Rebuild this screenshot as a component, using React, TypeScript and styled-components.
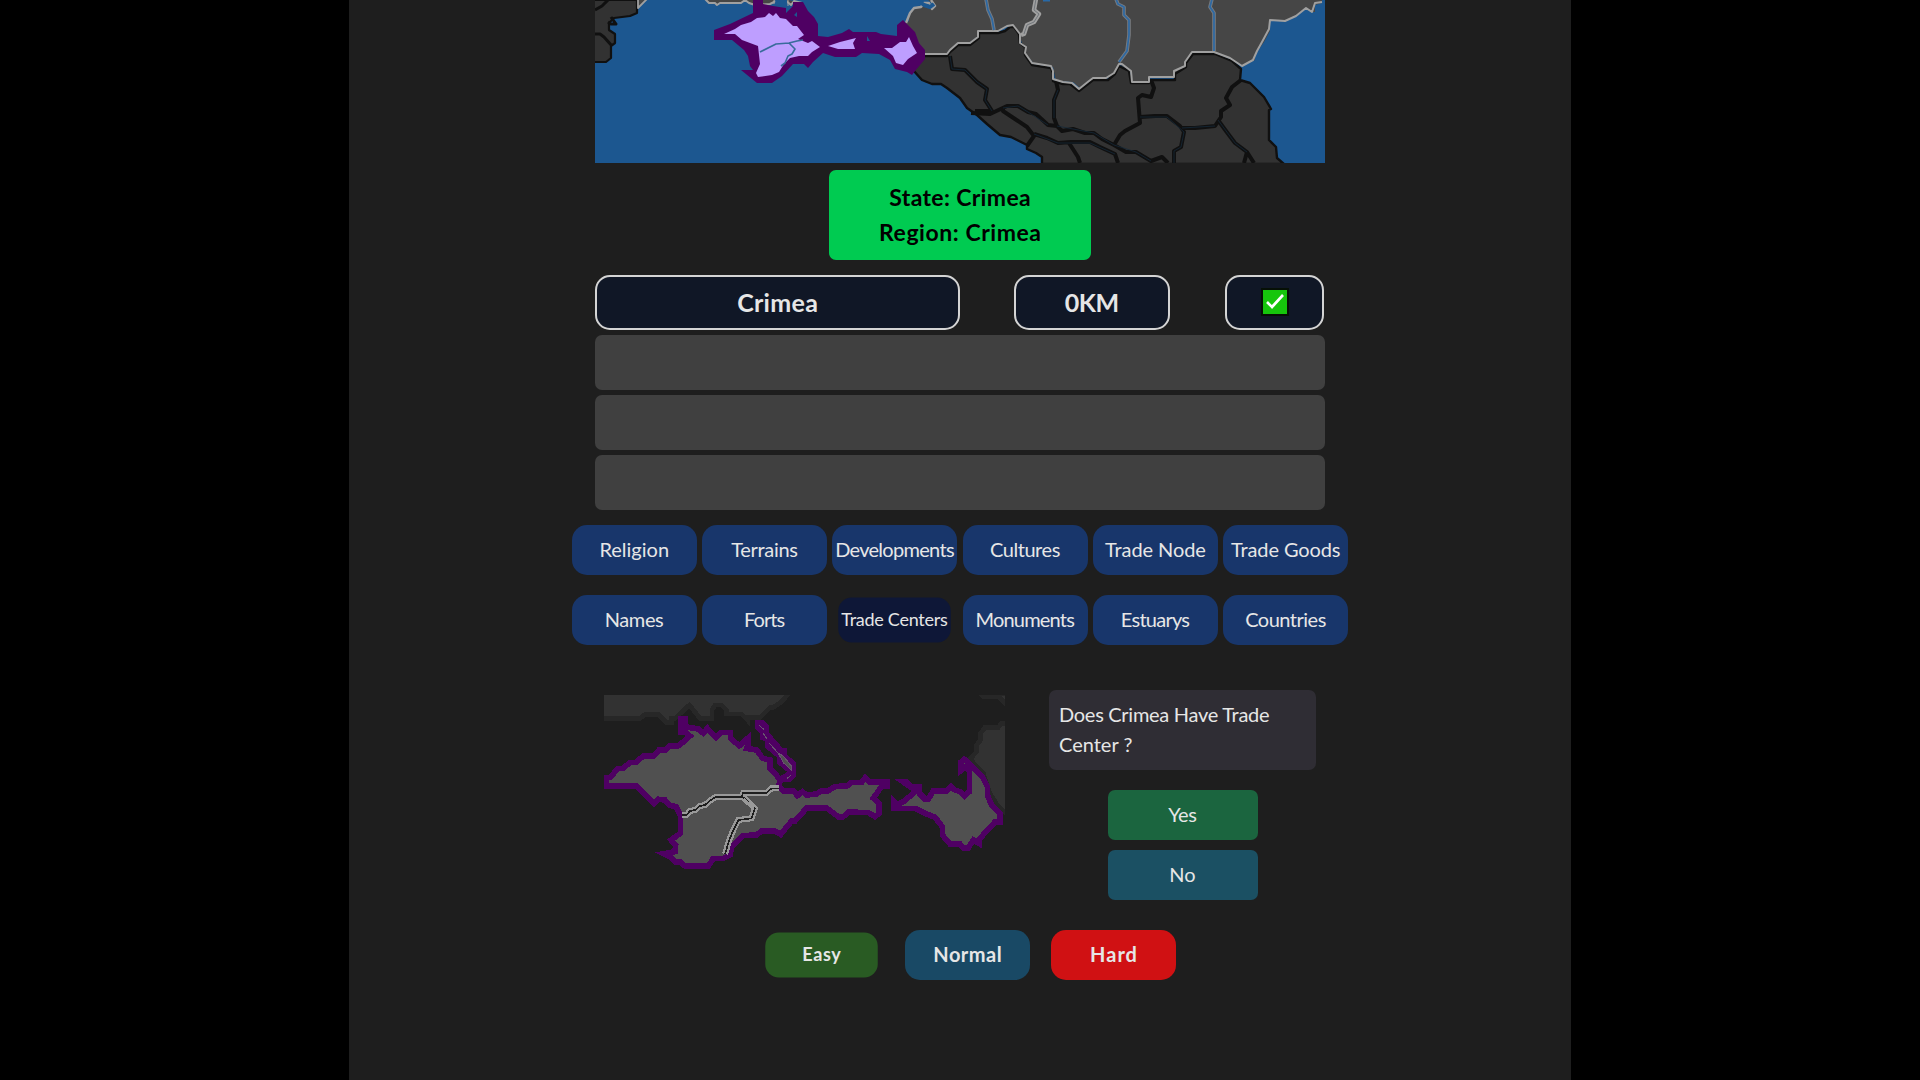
import React from "react";
import styled, { createGlobalStyle } from "styled-components";

const Global = createGlobalStyle`
  *{box-sizing:border-box}
  html,body{margin:0;background:#000;overflow:hidden}
  body{font-family:Lato,"Open Sans",sans-serif;font-size:20px;line-height:30px;color:#e6e6e6}
`;
const Page = styled.main`
  width:1222px;height:1080px;margin:0 auto;background:#1e1e1e;overflow:hidden;
  display:flex;flex-direction:column;align-items:center;
`;
const MapView = styled.div`width:730px;height:163px;background:#1c5790;flex:none;svg{display:block}`;
const Answer = styled.section`
  width:262px;height:90px;margin-top:7px;border-radius:7px;background:#00cb51;color:#000;
  display:flex;flex-direction:column;align-items:center;padding-top:10px;
  font-size:23px;font-weight:700;line-height:35px;flex:none;
`;
const Guess = styled.section`width:730px;display:grid;grid-template-columns:365px 156px 100px;column-gap:54px;margin-top:15px;flex:none;
  & > :last-child{margin-left:1px}
`;
const Cell = styled.div`
  height:55px;border:2px solid #d4d4d4;border-radius:15px;background:#101726;padding-bottom:2px;
  display:flex;align-items:center;justify-content:center;font-size:25px;font-weight:700;
`;
const Slots = styled.div`display:flex;flex-direction:column;gap:5px;margin-top:5px;flex:none;`;
const Slot = styled.div`width:730px;height:55px;border-radius:7px;background:#404040;`;
const Tabs = styled.nav`display:grid;grid-template-columns:repeat(6,125px);column-gap:5.3px;row-gap:20px;margin-top:15px;flex:none;`;
const Pill = styled.button<{ $bg?: string; $pressed?: boolean; $bold?: boolean }>`
  width:125px;height:50px;border:0;border-radius:15px;padding:0 0 3px;background:${p => p.$bg ?? "#18366b"};
  color:#e6e6e6;font:${p => (p.$bold ? 700 : 400)} 20px/30px Lato,"Open Sans",sans-serif;white-space:nowrap;
  display:flex;align-items:center;justify-content:center;
  transform:${p => (p.$pressed ? "scale(.9)" : "none")};
`;
const Text = styled.span<{ $ls?: number }>`letter-spacing:${p => p.$ls ?? 0}px;margin-right:${p => -(p.$ls ?? 0)}px;white-space:nowrap;`;
const Quiz = styled.section`width:730px;display:flex;justify-content:space-between;margin-top:45px;padding:0 9px;flex:none;`;
const Shape = styled.div`width:401px;height:180px;margin-top:5px;svg{display:block}`;
const Question = styled.div`width:267px;display:flex;flex-direction:column;align-items:center;`;
const Prompt = styled.div`
  width:267px;height:80px;border-radius:7px;background:#2f2d34;padding:9px 10px;display:flex;flex-direction:column;
  line-height:30px;margin-bottom:20px;
`;
const Option = styled.button<{ $bg: string }>`
  width:150px;height:50px;border:0;border-radius:7px;background:${p => p.$bg};color:#e6e6e6;margin-bottom:10px;padding:0 0 2px;
  font:400 20px/30px Lato,"Open Sans",sans-serif;
`;
const Levels = styled.div`display:flex;gap:21px;margin:20px 0 0 15px;flex:none;`;

const DARK = "#323232", LIGHT = "#464646", EDGE = "#a0a0a0", INK = "#101010";

const WorldMap = () => (
  <svg width="730" height="163" viewBox="595 0 730 163">
    <g strokeLinejoin="round" strokeLinecap="butt">
      <path d="M590 0H637V13L630 16L614 18L609 23V30L615 34V43L611 46V58L606 62H590Z" fill={DARK} stroke={INK} strokeWidth="2.2" />
      <path d="M595 10L602 6L610 -2M595 34H600L604 37L612 46M611 17L616 24H611L608 22" fill="none" stroke={INK} strokeWidth="3" />
      <path d="M638 -2V8L647 -1Z" fill={LIGHT} stroke={EDGE} strokeWidth="1.8" />
      <path d="M705 -1L709 3H715L717 5L720 3H741L745 0L749 3L755 5L770 4L774 2L778 -1M784 -1L791 5L794 1L802 3" fill={LIGHT} stroke={EDGE} strokeWidth="2" />

      <path d="M905 24L909 21V15L913 10L918 7L922 8V4L928 4L931 9L935 8V5L928 0V-3H1322V3L1315 5V12H1312L1306 8L1296 16L1285 21H1270V31L1264 42L1255 55V60L1242 66L1230 58L1214 52H1192V64L1174 75V77H1148V82H1132V73L1119 64L1114 75L1106 79H1093L1080 88L1073 82L1056 81L1053 67L1034 64L1025 53L1020 37L1011 25L998 31H979L977 37L969 43H958L949 51L947 54H925Z" fill={LIGHT} stroke="none" />
      <path d="M925 56H947L950 52L958 45H970L979 38V33H998L1005 31L1010 27H1014L1019 34L1020 43L1025 47V55L1032 65L1051 68L1053 73V81L1063 84H1070L1079 91L1088 84L1093 80H1108L1115 74L1119 66L1129 71L1131 83H1149V80H1175V74L1186 67V63L1193 54H1215L1232 61L1241 69L1240 80L1250 83L1264 97L1271 109L1269 110V140L1276 147L1277 158L1284 164H1042V157L1036 153L1027 149V145L1011 137L1000 135L987 124L977 115L967 108L960 98L947 88L941 84H932L922 80L913 70L909 64Z" fill={DARK} stroke={INK} strokeWidth="2.4" />
      <path d="M950 56L952 69L965 70L977 82L987 89L985 100L992 111H975M971 113L990 114L1007 106H1018L1028 112L1036 114L1048 125L1057 126L1054 118V100L1058 90L1056 81M992 113L1003 108L1003 111L1015 119L1027 127L1034 136L1027 146M1034 134L1047 138L1058 143L1071 142H1090L1100 147L1115 154L1118 163M1057 126L1062 131L1073 129L1085 133H1094L1102 139L1114 145L1126 152H1136L1151 161L1162 157L1168 163M1114 145L1120 135L1125 131L1140 123L1138 98L1142 95L1151 97L1154 88L1151 80M1140 117L1155 116H1167L1180 126L1184 132L1181 147L1174 151V163M1182 128H1195L1215 126L1221 117V111L1230 105L1226 98L1232 87L1241 80M1218 120L1226 131L1235 143L1247 152L1254 163M1247 152L1244 163M1069 143L1078 157L1080 163" fill="none" stroke={INK} strokeWidth="4" />
      <path d="M950 56L952 69L965 70L977 82L987 89L985 100L992 111M1003 108L1018 106L1028 112L1048 125M1054 118V100L1058 90M1034 134L1058 143H1090L1115 154M1057 126L1073 129L1094 133L1114 145L1136 152L1151 161M1140 117H1167L1184 132L1181 147L1174 151V163M1182 128L1215 126M1218 120L1235 143L1247 152" fill="none" stroke="#142839" strokeWidth=".8" />
      <path d="M925 54H947L950 50L958 43H970L978 37V31H998L1007 26L1013 25L1020 34V43L1026 47L1025 53L1032 63L1051 66L1053 71V79L1063 82L1072 83L1079 89L1089 81L1093 78H1106L1114 73L1119 64H1122L1131 71L1132 82H1149V77H1174V71L1185 66V62L1192 52H1214L1230 58L1242 66L1253 60L1257 51L1262 42L1269 29L1270 20L1285 21L1296 16L1306 8L1312 12L1315 3L1322 2" fill="none" stroke={EDGE} strokeWidth="2" />
      <path d="M906 23L910 13L914 8L921 7L924 3L929 3L932 9L935 6L931 0" fill="none" stroke={EDGE} strokeWidth="2.4" />
      <path d="M1036 -1L1034 10L1039 14L1034 22L1027 25L1024 34L1021 35" fill="none" stroke={EDGE} strokeWidth="4.4" />
      <path d="M1036 -1L1034 10L1039 14L1034 22L1027 25L1024 34" fill="none" stroke="#71767b" strokeWidth="1" />
      <path d="M986 -1L988 10L992 19L994 30M1116 -1L1118 4L1124 7L1124 15L1129 20V35L1127 51L1119 62M1212 -1L1210 7L1214 13V51" fill="none" stroke="#777b80" strokeWidth="3.6" />
      <path d="M986 -1L988 10L992 19L994 30M1116 -1L1118 4L1124 7L1124 15L1129 20V35L1127 51L1119 62M1212 -1L1210 7L1214 13V51" fill="none" stroke="#2d69a3" strokeWidth="1.7" />
      <path d="M1043 0H1050" stroke="#2869a6" strokeWidth="3" />
      <path d="M920 2L924 5L930 7L934 4" fill="none" stroke="#1c5790" strokeWidth="4" />

      <path d="M714 30L730 24L753 13V-2H763V4L773 6L786 8V13L793 6V2H803L808 11L814 17L818 24V36L828 37L842 33L849 29L853 32H876L881 34L897 36V25L903 20L915 32L919 43L925 50V59L915 71L912 75L907 72L895 69L890 60L879 54L862 53L856 57H835L823 53L813 62L808 68L804 64H793L782 76L772 83H757L741 70H753L750 66L748 56L744 50L732 40H714Z" fill="#4f0063" />
      <path d="M724 34L735 29L741 25L751 22L757 18L765 17L769 13L773 16L776 13L780 18L786 19L793 26H797L804 35L798 39L808 43L812 41L820 47L812 52L808 56L799 56L790 58L784 64L779 72L772 75L758 77L756 73L760 64L758 46L750 43L742 40L735 34Z" fill="#be9eff" />
      <path d="M828 46L840 42L848 40L856 38L853 43L855 49H838ZM884 48H892L900 42H906L909 37L913 46L917 53L908 59L903 65L896 63L893 56ZM877 45L880 48" fill="#be9eff" />
      <path d="M760 52L776 44L789 43L797 41L803 40M789 43L795 49L792 54L788 56L785 63L781 66" fill="none" stroke="#396b9b" strokeWidth="1.6" />
      <path d="M794 15L797 12V17ZM867 41V36L870 41ZM887 36L894 35" fill="#1c5790" />
      <path d="M775 0H787V7L776 5Z" fill="#1c5790" />
      <path d="M774 0V4M788 0V6" stroke={EDGE} />
    </g>
  </svg>
);

const COAST = "M49 318V292H60L85 265H100L120 247H138L160 228H190L208 209H228L240 197H265L285 182L300 168L285 155H271V115H285V140L325 147L340 160L352 145L378 172L395 157H421V175L448 197L474 174V195L470 205L500 210L518 235L540 240V265L572 300L565 318L580 332H610L622 347L637 335L650 345L680 342L695 332H715L735 320L775 317L785 307H815L826 293L838 305H892V318H875L850 355L867 370V400L855 410L835 398L775 396L760 410H745L710 384H650L615 423H605L572 463L555 453L515 452L500 465L458 467L425 500L420 525L400 535H370L355 558H285L270 545H255L240 530L222 521L255 515L257 495L243 480L271 460V405L258 380L240 376L225 360L205 358L192 371L140 318Z";
const TAMAN = "M940 306H950L965 320H988V340L1005 357H1015L1030 332H1070L1083 320L1095 330L1110 335L1123 348L1138 335V270L1125 262L1112 272V247L1123 238L1178 292L1192 320V345L1205 375L1230 400V426H1215L1167 478V490L1150 480L1135 503H1120L1110 492H1080L1057 465V440L1035 412L1005 400L975 385H910V362L922 374L945 362L978 332Z";
const BORDER = "M275 405H290L300 393L315 390L330 378L345 375L360 362L378 350H455L460 338H530L545 325H568M455 348L495 385L485 415L445 420L430 450L418 480L405 522";

const TargetShape = () => (
  <svg width="401" height="180" viewBox="42 45 1203 540" shapeRendering="crispEdges">
    <g fill="#323232" stroke="#272727" strokeWidth="14">
      <path d="M30 30H605L575 65L550 82H540L510 112H474V122L455 102H410V90L395 75H375L366 90V115H330L298 75L255 115H245V128H230L205 103H165L150 115H30Z" />
      <path d="M1170 40H1260V85L1225 49H1180ZM1260 130H1235L1225 142H1185L1172 160V180L1160 195V215L1140 237L1180 280L1200 340L1225 380L1260 410Z" />
    </g>
    <g fill="#505050" stroke="#4f0063" strokeWidth="17" strokeLinejoin="miter">
      <path d={COAST} />
      <path d={TAMAN} />
    </g>
    <path d="M495 121H522L537 138V157L577 203H590V222L617 247V292L600 307H580L568 290L592 276L560 250V232L525 203V185L510 178V160L495 145Z" fill="#4f0063" />
    <path d="M565 220L580 228L603 257V270L580 248ZM508 137L522 148ZM520 160L532 178ZM538 190L565 220M592 295L602 286" fill="#505050" stroke="#68556f" strokeWidth="3" />
    <g fill="none" strokeLinejoin="miter">
      <path d={BORDER} stroke="#999" strokeWidth="18" />
      <path d={BORDER} stroke="#1e1e1e" strokeWidth="5" />
      <path d="M462 355L492 384" stroke="#999" strokeWidth="5" />
    </g>
  </svg>
);

const tabs: [string, number][] = [["Religion", 0], ["Terrains", -0.3], ["Developments", -0.7], ["Cultures", -0.45], ["Trade Node", -0.1], ["Trade Goods", -0.1],
  ["Names", -0.4], ["Forts", -0.9], ["Trade Centers", -0.3], ["Monuments", -0.8], ["Estuarys", -0.75], ["Countries", -0.5]];

export default function App() {
  return (
    <>
      <Global />
      <Page>
        <MapView><WorldMap /></MapView>
        <Answer><Text $ls={0.35}>State: Crimea</Text><Text $ls={0.55}>Region: Crimea</Text></Answer>
        <Guess>
          <Cell><Text $ls={0.3}>Crimea</Text></Cell>
          <Cell><Text $ls={-0.4}>0KM</Text></Cell>
          <Cell>
            <svg width="28" height="28" viewBox="0 0 28 28"><rect x="1" y="1" width="26" height="26" fill="#16c60c" stroke="#061006" strokeWidth="2" /><path d="M6 14L11 19L22 7" fill="none" stroke="#fff" strokeWidth="2.6" /></svg>
          </Cell>
        </Guess>
        <Slots><Slot /><Slot /><Slot /></Slots>
        <Tabs>
          {tabs.map(([t, ls]) => (
            <Pill key={t} $pressed={t === "Trade Centers"} $bg={t === "Trade Centers" ? "#0e1737" : undefined}><Text $ls={ls}>{t}</Text></Pill>
          ))}
        </Tabs>
        <Quiz>
          <Shape><TargetShape /></Shape>
          <Question>
            <Prompt><div><Text $ls={-0.28}>Does Crimea Have Trade</Text></div><div><Text>Center ?</Text></div></Prompt>
            <Option $bg="#1b653f"><Text $ls={-0.4}>Yes</Text></Option>
            <Option $bg="#1b5063"><Text>No</Text></Option>
          </Question>
        </Quiz>
        <Levels>
          <Pill $bold $pressed $bg="#295b23"><Text $ls={0.7}>Easy</Text></Pill>
          <Pill $bold $bg="#194965"><Text $ls={0.5}>Normal</Text></Pill>
          <Pill $bold $bg="#d01113"><Text $ls={1}>Hard</Text></Pill>
        </Levels>
      </Page>
    </>
  );
}
